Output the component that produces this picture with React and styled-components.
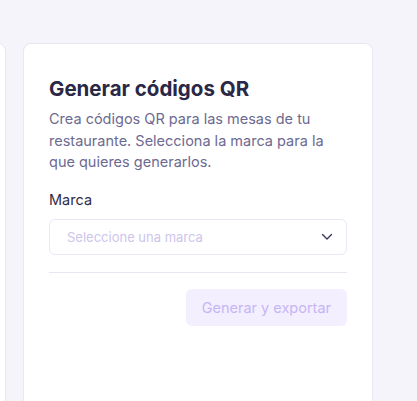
import React from 'react';
import styled, { createGlobalStyle } from 'styled-components';

const GlobalStyle = createGlobalStyle`
  html, body {
    margin: 0;
    padding: 0;
    background: #f5f4fa;
    font-family: Inter, "Noto Sans", sans-serif;
  }
`;

const Page = styled.div`
  height: 401px;
  overflow: hidden;
  display: flex;
  justify-content: flex-end;
  gap: 17px;
  padding: 43px 44px 0 0;
  box-sizing: border-box;
`;

const Card = styled.section`
  flex-shrink: 0;
  width: 350px;
  height: 420px;
  box-sizing: border-box;
  background: #ffffff;
  border: 1px solid #e9e7f1;
  border-radius: 8px;
  padding: 31px 25px 0 25px;
`;

const Title = styled.h2`
  margin: 0;
  font-size: 20.5px;
  line-height: 28px;
  font-weight: 700;
  color: #2a2846;
`;

const Description = styled.p`
  margin: 5px 0 0;
  font-size: 14.5px;
  line-height: 21.5px;
  color: #6d6a91;
`;

const Field = styled.div`
  margin-top: 17px;
  display: flex;
  flex-direction: column;
  gap: 9px;
`;

const Label = styled.label`
  font-size: 14.5px;
  line-height: 20px;
  color: #2f2c4b;
`;

const Select = styled.button`
  height: 36px;
  width: 100%;
  box-sizing: border-box;
  display: flex;
  align-items: center;
  justify-content: space-between;
  padding: 0 13px 0 17px;
  background: #fff;
  border: 1px solid #eae7f4;
  border-radius: 6px;
  font-family: inherit;
  font-size: 13px;
  color: #cdc5ec;
  cursor: pointer;
`;

const Divider = styled.hr`
  margin: 17px 0 0;
  border: 0;
  border-top: 1px solid #e9e6f2;
`;

const Actions = styled.div`
  display: flex;
  justify-content: flex-end;
  margin-top: 16px;
`;

const PrimaryButton = styled.button`
  height: 37px;
  padding: 0 16px;
  border: 0;
  border-radius: 6px;
  background: #f3efff;
  color: #c6b6f5;
  font-family: inherit;
  font-size: 14.5px;
  cursor: not-allowed;
`;

const Chevron = () => (
  <svg width="12" height="8" viewBox="0 0 12 8" fill="none">
    <path d="M1.5 1.5 6 6 10.5 1.5" stroke="#3a3756" strokeWidth="1.4" strokeLinecap="round" strokeLinejoin="round" />
  </svg>
);

export default function App() {
  return (
    <>
      <GlobalStyle />
      <Page>
        <Card />
        <Card>
          <Title>Generar códigos QR</Title>
          <Description>
            Crea códigos QR para las mesas de tu restaurante. Selecciona la marca para la que quieres generarlos.
          </Description>
          <Field>
            <Label>Marca</Label>
            <Select type="button">
              <span>Seleccione una marca</span>
              <Chevron />
            </Select>
          </Field>
          <Divider />
          <Actions>
            <PrimaryButton type="button" disabled>Generar y exportar</PrimaryButton>
          </Actions>
        </Card>
      </Page>
    </>
  );
}
